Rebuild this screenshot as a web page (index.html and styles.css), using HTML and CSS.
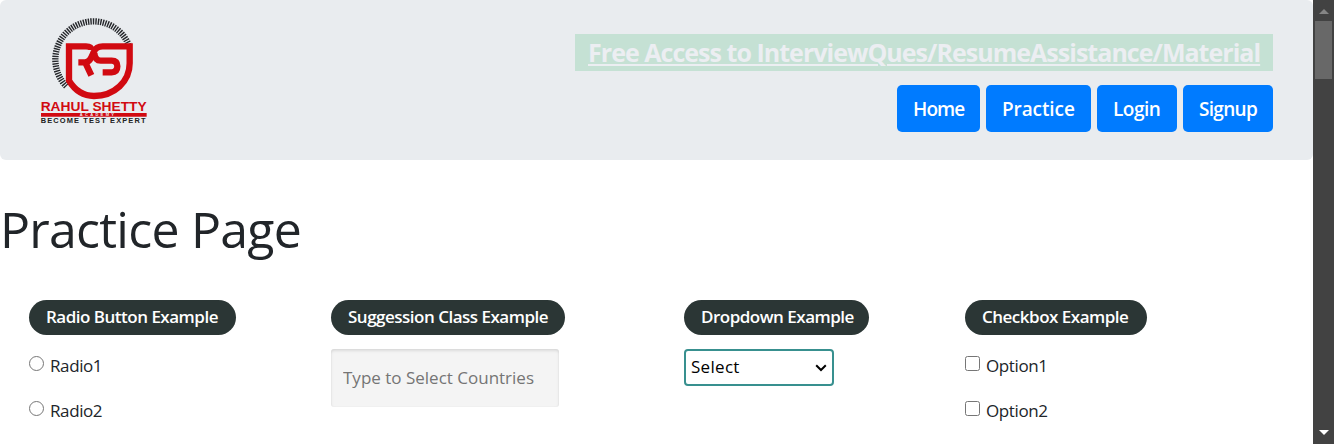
FILE: index.html
```html
<!DOCTYPE html>
<html lang="en">
<head>
<meta charset="utf-8">
<title>Practice Page</title>
<link rel="stylesheet" href="styles.css">
</head>
<body>
<div class="window">
  <div class="page">
    <header class="header">
      <svg class="logo" viewBox="0 0 390 360" role="img" aria-label="Rahul Shetty Academy">
        <path class="ticks" d="M109 229A114.500 114.500 0 1 1 296 104"/>
        <path class="mark" d="M165 157C182 157 186 136 192 124Q199 109 218 109H299V160C299 214 254 258 192 258Q145 258 117 212V109H168Q184 109 184 120"/>
        <path class="mark" d="M145 157H167M166 158L184 196"/>
        <path class="mark" d="M193 129Q195 152 212 152H245Q262 152 262 169Q262 187 245 187H218"/>
        <text class="logo-name" x="32" y="304" textLength="318" lengthAdjust="spacingAndGlyphs">RAHUL SHETTY</text>
        <path class="logo-bar" d="M33 309H350V320H33Z"/>
        <text class="logo-academy" x="149" y="319" textLength="103">ACADEMY</text>
        <text class="logo-tag" x="32" y="339" textLength="318" lengthAdjust="spacingAndGlyphs">BECOME TEST EXPERT</text>
      </svg>
      <div class="header-right">
        <a class="banner">Free Access to InterviewQues/ResumeAssistance/Material</a>
        <nav class="nav">
          <a class="btn home">Home</a><a class="btn practice">Practice</a><a class="btn login">Login</a><a class="btn signup">Signup</a>
        </nav>
      </div>
    </header>
    <h1 class="title">Practice Page</h1>
    <main class="examples">
      <section class="example">
        <h2 class="pill radio-pill">Radio Button Example</h2>
        <label class="choice"><input class="box" type="radio" name="r"><span>Radio1</span></label>
        <label class="choice"><input class="box" type="radio" name="r"><span>Radio2</span></label>
      </section>
      <section class="example">
        <h2 class="pill suggest-pill">Suggession Class Example</h2>
        <input class="suggest" type="text" placeholder="Type to Select Countries">
      </section>
      <section class="example">
        <h2 class="pill drop-pill">Dropdown Example</h2>
        <div class="select"><span>Select</span>
          <svg class="chevron" viewBox="0 0 12 8"><path d="M1.2 1.3L6 6L10.8 1.3"/></svg>
        </div>
      </section>
      <section class="example">
        <h2 class="pill check-pill">Checkbox Example</h2>
        <label class="choice option"><input class="box" type="checkbox"><span>Option1</span></label>
        <label class="choice option"><input class="box" type="checkbox"><span>Option2</span></label>
      </section>
    </main>
  </div>
  <div class="scrollbar">
    <svg class="arrow up" viewBox="0 0 10 5"><path d="M0 5L5 0L10 5Z"/></svg>
    <div class="thumb"></div>
    <svg class="arrow down" viewBox="0 0 10 5"><path d="M0 0H10L5 5Z"/></svg>
  </div>
</div>
</body>
</html>
```
FILE: styles.css
```css
* { box-sizing: border-box; }
body {
  margin: 0;
  background: #fff;
  color: #212529;
  font-family: "Trebuchet MS", "Open Sans", sans-serif;
  font-size: 17px;
  overflow: hidden;
}
.window { display: flex; height: 444px; overflow: hidden; }
.page { flex: 1; min-width: 0; overflow: hidden; }
.header {
  display: flex;
  justify-content: space-between;
  height: 160px;
  padding: 10px 40px 0 30px;
  background: #e9ecef;
  border-radius: 6px;
}
.logo { width: 130px; height: 120px; }
.ticks { fill: none; stroke: #25272b; stroke-width: 19; stroke-dasharray: 4.2 3.2; }
.mark { fill: none; stroke: #d10a11; stroke-width: 19; }
.logo-name { font: 700 40px "Liberation Sans", sans-serif; fill: #d10a11; }
.logo-bar { fill: #d10a11; }
.logo-academy { font: 700 12px "Liberation Sans", sans-serif; fill: #e9ecef; }
.logo-tag { font: 700 20px "Liberation Sans", sans-serif; letter-spacing: 3px; fill: #222; }
.header-right { display: flex; flex-direction: column; align-items: flex-end; padding-top: 24px; }
.banner {
  width: 698px;
  height: 37px;
  padding-left: 13px;
  background: #c5e1d4;
  color: #eceef2;
  font-size: 25px;
  font-weight: 700;
  line-height: 36px;
  letter-spacing: -0.97px;
  white-space: nowrap;
  text-decoration: underline;
  text-decoration-thickness: 2px;
  text-underline-offset: 2px;
}
.nav { display: flex; gap: 6px; margin-top: 14px; }
.btn {
  height: 47px;
  padding-left: 16px;
  border-radius: 5px;
  background: #007bff;
  color: #fff;
  font-size: 19px;
  font-weight: 600;
  line-height: 49px;
  letter-spacing: -0.6px;
  white-space: nowrap;
}
.home { width: 83px; letter-spacing: -0.9px; }
.practice { width: 105px; letter-spacing: -0.1px; }
.login { width: 80px; letter-spacing: -0.5px; }
.signup { width: 90px; letter-spacing: -0.7px; }
.title {
  margin: 40px 0 0;
  height: 60px;
  font-size: 50px;
  font-weight: 400;
  line-height: 59px;
  letter-spacing: -0.75px;
  white-space: nowrap;
}
.examples {
  display: grid;
  grid-template-columns: 302px 353px 281px 1fr;
  padding: 40px 0 0 29px;
}
.example { display: flex; flex-direction: column; align-items: flex-start; }
.pill {
  height: 35px;
  margin: 0 0 14px;
  padding-left: 17px;
  border-radius: 18px;
  background: #2b3635;
  color: #fff;
  font-size: 17px;
  font-weight: 600;
  line-height: 34px;
  letter-spacing: -0.5px;
  white-space: nowrap;
}
.radio-pill { width: 207px; }
.suggest-pill { width: 234px; }
.drop-pill { width: 185px; }
.check-pill { width: 182px; }
.choice {
  display: flex;
  gap: 6px;
  height: 45px;
  line-height: 33px;
  letter-spacing: -0.4px;
}
.box { width: 15px; height: 15px; margin: 7px 0 0; }
.suggest {
  width: 228px;
  height: 58px;
  padding: 0 12px 2px;
  border: 0;
  border-radius: 3px;
  background: #f4f4f4;
  box-shadow: inset 0 2px 3px rgba(0,0,0,.1), inset 0 0 2px rgba(0,0,0,.06);
  font: inherit;
  letter-spacing: 0;
}
.suggest::placeholder { color: #757575; opacity: 1; }
.select {
  display: flex;
  align-items: center;
  justify-content: space-between;
  width: 150px;
  height: 37px;
  padding: 0 5px;
  border: 2px solid #38908f;
  border-radius: 4px;
  color: #000;
  line-height: 31px;
  letter-spacing: 0.3px;
}
.select span { padding-bottom: 2px; }
.chevron { width: 12px; height: 8px; }
.chevron path { fill: none; stroke: #000; stroke-width: 2; }
.scrollbar {
  display: flex;
  flex-direction: column;
  align-items: center;
  width: 21px;
  background: #424242;
}
.arrow { width: 10px; height: 5px; }
.up { margin: 9px 0 7px; fill: #858585; }
.thumb { width: 17px; height: 58px; background: #686868; }
.down { margin: auto 0 9px; fill: #fff; }
```
